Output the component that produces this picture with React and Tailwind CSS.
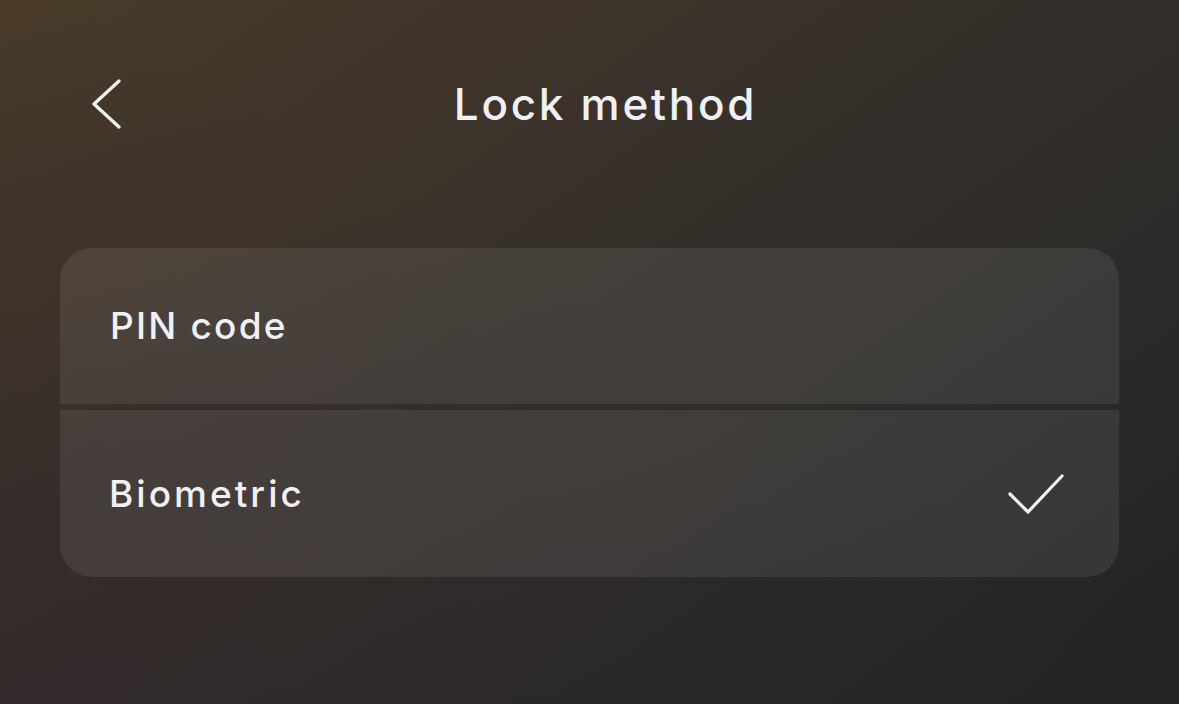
export default function App() {
  return (
    <div
      className="relative w-[1179px] h-[704px] overflow-hidden bg-[linear-gradient(145deg,#4a3b29_0%,#3a322b_35%,#2c2b29_70%,#222422_100%)]"
      style={{ fontFamily: "Inter, 'Noto Sans', sans-serif" }}
    >
      <div className="absolute inset-0 bg-[linear-gradient(210deg,rgba(0,0,0,0)_45%,rgba(45,32,42,0.35)_100%)]" />
      <div className="relative flex flex-col px-[60px]">
        <div className="h-[208px] flex items-center">
          <div className="w-[80px] flex items-center">
            <svg width="40" height="52" viewBox="0 0 40 52" className="ml-[32px]">
              <path d="M27 3 L2 26 L27 49" fill="none" stroke="#f2f3f7" strokeWidth="3.3" strokeLinecap="round" strokeLinejoin="round" />
            </svg>
          </div>
          <div className="flex-1 flex justify-center">
            <h1 className="text-[44px] font-medium text-[#eff1f6] tracking-[0.062em] leading-none -ml-[48px]">Lock method</h1>
          </div>
        </div>
        <div className="mt-[40px] flex flex-col gap-[6px]">
          <div className="h-[156px] bg-white/[0.08] rounded-t-[32px] flex items-center pl-[50px]">
            <span className="text-[37px] font-medium text-[#eff1f6] tracking-[0.06em]">PIN code</span>
          </div>
          <div className="h-[167px] bg-white/[0.08] rounded-b-[32px] flex items-center justify-between pl-[49px] pr-[54px]">
            <span className="text-[37px] font-medium text-[#eff1f6] tracking-[0.082em]">Biometric</span>
            <svg width="58" height="44" viewBox="0 0 58 44">
              <path d="M3 22 L21 40 L55 4" fill="none" stroke="#f2f3f7" strokeWidth="3.2" strokeLinecap="round" strokeLinejoin="round" />
            </svg>
          </div>
        </div>
      </div>
    </div>
  );
}
